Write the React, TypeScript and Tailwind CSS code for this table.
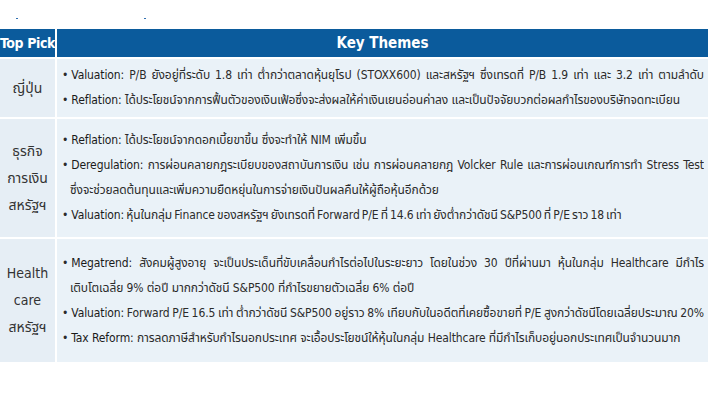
import React from 'react';

// One line of a bullet cell; full lines are stretched to the cell width
interface Line {
  label?: string;
  text: string;
  full?: boolean;
  indent?: boolean;
  tight?: boolean;
}

interface Row {
  pick: string[];
  height: string;
  lines: Line[];
}

const rows: Row[] = [
  {
    pick: ['ญี่ปุ่น'],
    height: 'h-[58px]',
    lines: [
      {
        label: 'Valuation:',
        text: 'P/B ยังอยู่ที่ระดับ 1.8 เท่า ต่ำกว่าตลาดหุ้นยุโรป (STOXX600) และสหรัฐฯ ซึ่งเทรดที่ P/B 1.9 เท่า และ 3.2 เท่า ตามลำดับ',
        full: true,
      },
      {
        label: 'Reflation:',
        text: 'ได้ประโยชน์จากการฟื้นตัวของเงินเฟ้อซึ่งจะส่งผลให้ค่าเงินเยนอ่อนค่าลง และเป็นปัจจัยบวกต่อผลกำไรของบริษัทจดทะเบียน',
      },
    ],
  },
  {
    pick: ['ธุรกิจ', 'การเงิน', 'สหรัฐฯ'],
    height: 'h-[118px]',
    lines: [
      { label: 'Reflation:', text: 'ได้ประโยชน์จากดอกเบี้ยขาขึ้น ซึ่งจะทำให้ NIM เพิ่มขึ้น' },
      {
        label: 'Deregulation:',
        text: 'การผ่อนคลายกฎระเบียบของสถาบันการเงิน เช่น การผ่อนคลายกฎ Volcker Rule และการผ่อนเกณฑ์การทำ Stress Test',
        full: true,
      },
      { text: 'ซึ่งจะช่วยลดต้นทุนและเพิ่มความยืดหยุ่นในการจ่ายเงินปันผลคืนให้ผู้ถือหุ้นอีกด้วย', indent: true },
      {
        label: 'Valuation:',
        text: 'หุ้นในกลุ่ม Finance ของสหรัฐฯ ยังเทรดที่ Forward P/E ที่ 14.6 เท่า ยังต่ำกว่าดัชนี S&P500 ที่ P/E ราว 18 เท่า',
        tight: true,
      },
    ],
  },
  {
    pick: ['Health', 'care', 'สหรัฐฯ'],
    height: 'h-[123px]',
    lines: [
      {
        label: 'Megatrend:',
        text: 'สังคมผู้สูงอายุ จะเป็นประเด็นที่ขับเคลื่อนกำไรต่อไปในระยะยาว โดยในช่วง 30 ปีที่ผ่านมา หุ้นในกลุ่ม Healthcare มีกำไร',
        full: true,
      },
      { text: 'เติบโตเฉลี่ย 9% ต่อปี มากกว่าดัชนี S&P500 ที่กำไรขยายตัวเฉลี่ย 6% ต่อปี', indent: true },
      {
        label: 'Valuation:',
        text: 'Forward P/E 16.5 เท่า ต่ำกว่าดัชนี S&P500 อยู่ราว 8% เทียบกับในอดีตที่เคยซื้อขายที่ P/E สูงกว่าดัชนีโดยเฉลี่ยประมาณ 20%',
        full: true,
        tight: true,
      },
      { label: 'Tax Reform:', text: 'การลดภาษีสำหรับกำไรนอกประเทศ จะเอื้อประโยชน์ให้หุ้นในกลุ่ม Healthcare ที่มีกำไรเก็บอยู่นอกประเทศเป็นจำนวนมาก' },
    ],
  },
];

export default function App() {
  return (
    <div className="w-[710px] h-[400px] bg-white font-['Liberation_Sans_Narrow','DejaVu_Sans_Condensed','Noto_Sans_Thai',sans-serif] text-[#2b2b2b]">
      <div className="h-[29px] relative">
        <span className="absolute left-[16px] top-[18px] w-[2px] h-[1px] bg-[#2f6fb0]" />
        <span className="absolute left-[144px] top-[18px] w-[2px] h-[1px] bg-[#2f6fb0]" />
      </div>
      <div className="grid grid-cols-[55px_minmax(0,1fr)] gap-[2px] pr-[2px]">
        <div className="h-[28px] bg-[#0b5b9c] flex items-center justify-center text-white font-bold text-[14px] tracking-[-0.4px]">
          Top Pick
        </div>
        <div className="h-[28px] bg-[#0b5b9c] flex items-center justify-center text-white font-bold text-[15px]">
          Key Themes
        </div>
        {rows.map((row, i) => (
          <React.Fragment key={i}>
            <div className={`${row.height} bg-[#e6eef5] flex flex-col items-center justify-center text-[14px] leading-[27px] text-[#333]`}>
              {row.pick.map((p) => (
                <div key={p}>{p}</div>
              ))}
            </div>
            <div className={`${row.height} min-w-0 bg-[#eaf2f8] flex flex-col justify-center pl-[5px] pr-[4px] text-[12px] tracking-[-0.1px] leading-[25px]`}>
              {row.lines.map((line, j) => (
                <div
                  key={j}
                  className={`whitespace-nowrap overflow-hidden ${line.full ? 'text-justify [text-align-last:justify]' : ''} ${line.indent ? 'pl-[8px]' : ''} ${line.tight ? '[word-spacing:-1.2px]' : ''}`}
                >
                  {line.label && (
                    <>
                      <span className="mr-[3px]">•</span>
                      <span className="text-[#1a1a1a]">{line.label}</span>{' '}
                    </>
                  )}
                  {line.text}
                </div>
              ))}
            </div>
          </React.Fragment>
        ))}
      </div>
    </div>
  );
}
